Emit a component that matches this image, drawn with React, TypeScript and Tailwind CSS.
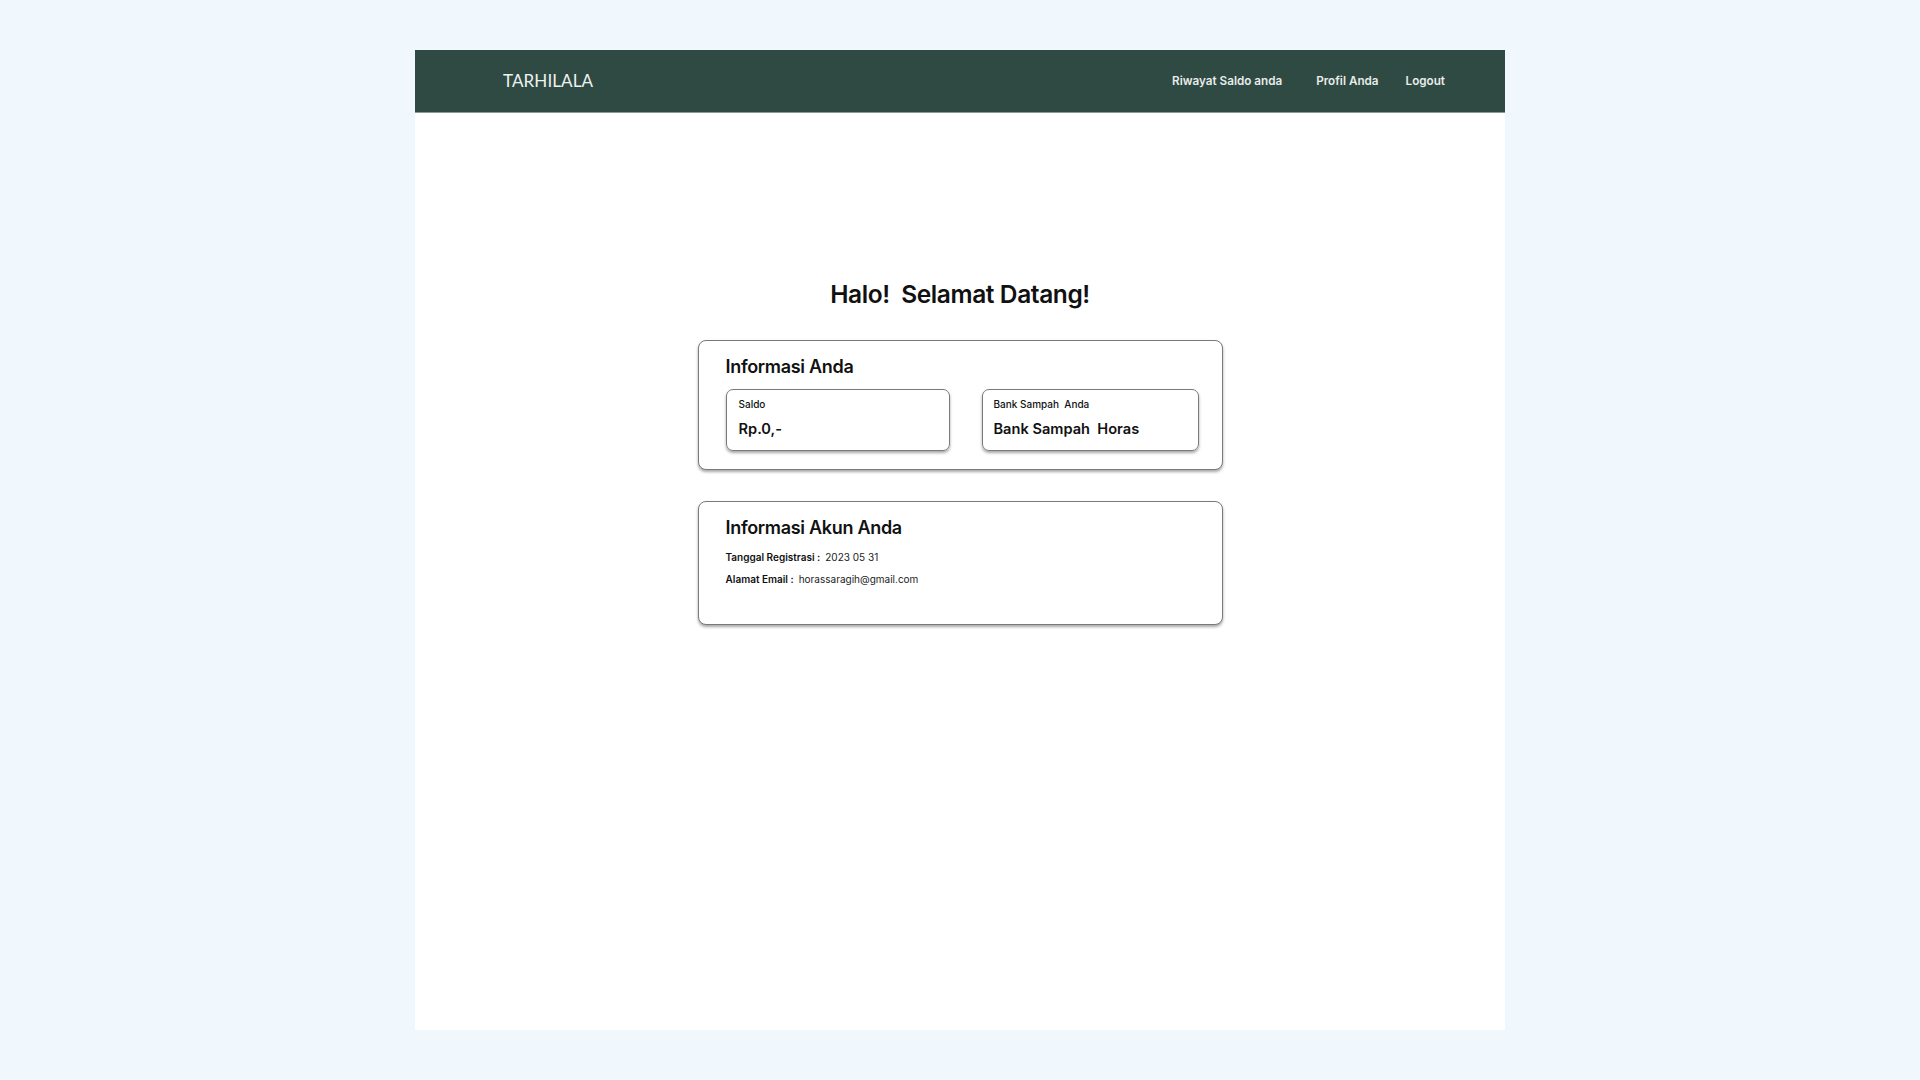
import React from "react";

export default function App() {
  return (
    <div className="min-h-screen w-full bg-[#f0f7fd] pt-[50px] pb-[50px]" style={{ fontFamily: "Inter, 'Noto Sans', sans-serif" }}>
      <div className="mx-auto flex h-[980px] w-[1090px] flex-col bg-white">
        <header className="flex h-[63px] items-center justify-between border-b border-[#8a9a95] bg-[#2f4a43] pl-[88px] pr-[60px]">
          <div className="text-[17px] font-normal tracking-[0.1px] text-[#eef2f0]" style={{ fontFamily: "Lato, 'Open Sans', sans-serif" }}>
            TARHILALA
          </div>
          <nav className="flex items-center pt-[1px] text-[11.7px] font-semibold text-[#e8ecea]">
            <span>Riwayat Saldo anda</span>
            <span className="ml-[34px]">Profil Anda</span>
            <span className="ml-[27px]">Logout</span>
          </nav>
        </header>

        <main className="flex flex-col items-center pt-[165px]">
          <h1 className="text-[24.5px] font-semibold leading-[32px] tracking-[-0.4px] text-[#111]">Halo!&nbsp; Selamat Datang!</h1>

          <section className="mt-[30px] w-[525px] rounded-[8px] border border-[#7a7a7a] bg-white pt-[15px] pb-[18px] pl-[27px] pr-[23px] shadow-[0_2px_3px_rgba(0,0,0,0.35)]">
            <h2 className="text-[18px] font-semibold leading-[22px] tracking-[-0.3px] text-[#111]">Informasi Anda</h2>
            <div className="mt-[11px] flex gap-[32px]">
              <div className="h-[62px] w-[226px] rounded-[7px] border border-[#7a7a7a] px-[12px] pt-[8px] shadow-[0_2px_3px_rgba(0,0,0,0.35)]">
                <div className="text-[10px] font-medium leading-[12px] text-[#111]">Saldo</div>
                <div className="mt-[10px] text-[14.6px] font-semibold leading-[18px] text-[#111]">Rp.0,-</div>
              </div>
              <div className="h-[62px] w-[217px] rounded-[7px] border border-[#7a7a7a] px-[10px] pt-[8px] shadow-[0_2px_3px_rgba(0,0,0,0.35)]">
                <div className="text-[10px] font-medium leading-[12px] text-[#111]">Bank Sampah&nbsp; Anda</div>
                <div className="mt-[10px] text-[14.6px] font-semibold leading-[18px] text-[#111]">Bank Sampah&nbsp; Horas</div>
              </div>
            </div>
          </section>

          <section className="mt-[31px] h-[124px] w-[525px] rounded-[8px] border border-[#7a7a7a] bg-white pt-[15px] pl-[27px] pr-[23px] shadow-[0_2px_3px_rgba(0,0,0,0.35)]">
            <h2 className="text-[18px] font-semibold leading-[22px] tracking-[-0.3px] text-[#111]">Informasi Akun Anda</h2>
            <div className="mt-[11px] flex flex-col gap-[8px] text-[10px] leading-[14px] text-[#222]">
              <div>
                <span className="font-semibold text-[#111]">Tanggal Registrasi :</span>
                <span className="ml-[5px]">2023 05 31</span>
              </div>
              <div>
                <span className="font-semibold text-[#111]">Alamat Email :</span>
                <span className="ml-[5px]">horassaragih@gmail.com</span>
              </div>
            </div>
          </section>
        </main>
      </div>
    </div>
  );
}
